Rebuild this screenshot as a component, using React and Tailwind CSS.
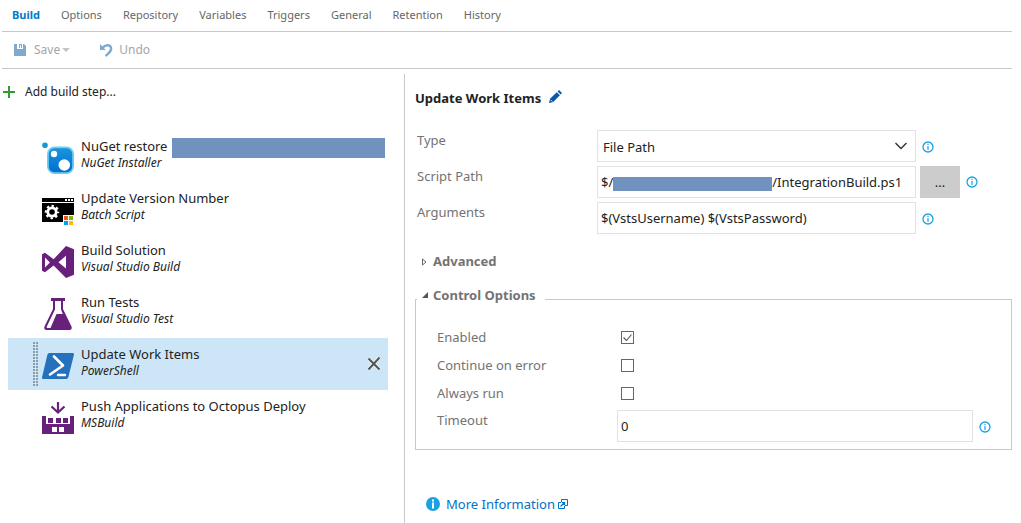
import { useState } from "react";

const tabs = ["Build", "Options", "Repository", "Variables", "Triggers", "General", "Retention", "History"];

function NuGetIcon() {
  return (
    <svg width="32" height="32" viewBox="0 0 32 32" aria-hidden="true">
      <defs>
        <linearGradient id="nuget" x1="0" y1="0" x2="0" y2="1">
          <stop offset="0" stopColor="#1a94dc" />
          <stop offset="1" stopColor="#0070d2" />
        </linearGradient>
      </defs>
      <circle cx="3" cy="3.2" r="2.8" fill="#159ad0" />
      <rect x="5" y="4.500" width="27" height="27.500" rx="7.500" fill="#6fcdf2" />
      <rect x="6.800" y="6.300" width="23.400" height="23.900" rx="5.500" fill="url(#nuget)" />
      <circle cx="12" cy="12" r="3.200" fill="#fff" />
      <circle cx="22.300" cy="23" r="5.800" fill="#fff" />
    </svg>
  );
}

function BatchIcon() {
  return (
    <svg width="32" height="32" viewBox="0 0 32 32" aria-hidden="true">
      <rect x="0" y="4" width="32" height="4" fill="#000" />
      <path d="M23 5h2v2h-2zM26 5h2v2h-2zM29 5h2v2h-2z" fill="#fff" />
      <rect x="0" y="9" width="32" height="19" fill="#000" />
      <circle cx="10" cy="18" r="4.200" fill="none" stroke="#fff" strokeWidth="2.800" />
      <circle cx="10" cy="18" r="6.100" fill="none" stroke="#fff" strokeWidth="2.200" strokeDasharray="2.395 2.395" strokeDashoffset="1.198" />
      <rect x="21" y="21" width="11" height="11" fill="#fff" />
      <rect x="22" y="22" width="4" height="4" fill="#f65314" />
      <rect x="27" y="22" width="4" height="4" fill="#7cbb00" />
      <rect x="22" y="27" width="4" height="4" fill="#00a1f1" />
      <rect x="27" y="27" width="4" height="4" fill="#ffbb00" />
    </svg>
  );
}

function VisualStudioIcon() {
  return (
    <svg width="32" height="32" viewBox="0 0 32 32" aria-hidden="true">
      <path fill="#68217a" fillRule="evenodd" d="M24 0l8 3.200v25.600L24 32 11.600 19.600 3 26.200 0 24.700V8.200L3 6.700l8.600 6.600zM24 9.800l-7.600 6.500 7.600 6.300zM3 11.600v9.800l4.900-5z" />
    </svg>
  );
}

function FlaskIcon() {
  return (
    <svg width="32" height="32" viewBox="0 0 32 32" aria-hidden="true">
      <path fill="#68217a" fillRule="evenodd" d="M9 0h14v3h-2v8l8.500 17.500c.8 2-.2 3.500-2 3.500h-23c-1.800 0-2.800-1.500-2-3.500L11 11V3H9zM13 3v8.500L4.800 28.400c-.4 1 .1 1.600 1 1.600H8.500L14.500 16h6.300L19 11.500V3z" />
    </svg>
  );
}

function PowerShellIcon() {
  return (
    <svg width="32" height="32" viewBox="0 0 32 32" aria-hidden="true">
      <path fill="#2671be" d="M7.500 3H30.500c1.200 0 1.700.8 1.400 2l-5.500 22c-.3 1.200-1.200 2-2.400 2H1.400C.3 29-.2 28.200.1 27L5.300 5c.3-1.200 1.100-2 2.200-2z" />
      <path d="M12 6.500l9 9L8 24.500" fill="none" stroke="#fff" strokeWidth="2.600" strokeLinecap="round" strokeLinejoin="round" />
      <path d="M16 25h7" stroke="#fff" strokeWidth="2.400" strokeLinecap="round" />
    </svg>
  );
}

function MSBuildIcon() {
  return (
    <svg width="32" height="32" viewBox="0 0 32 32" aria-hidden="true">
      <path d="M16 0v10M9.500 4.500l6.500 6 6.500-6" fill="none" stroke="#68217a" strokeWidth="2.200" />
      <path fill="#68217a" fillRule="evenodd" d="M0 14h4v8h24v-8h4v18H0zM10 25v5h5v-5zM17 25v5h5v-5z" />
      <path fill="#68217a" d="M6 16h5v5H6zM14 16h5v5h-5zM21 16h5v5h-5z" />
    </svg>
  );
}

const steps = [
  { name: "NuGet restore", task: "NuGet Installer", Icon: NuGetIcon, masked: true },
  { name: "Update Version Number", task: "Batch Script", Icon: BatchIcon },
  { name: "Build Solution", task: "Visual Studio Build", Icon: VisualStudioIcon },
  { name: "Run Tests", task: "Visual Studio Test", Icon: FlaskIcon },
  { name: "Update Work Items", task: "PowerShell", Icon: PowerShellIcon },
  { name: "Push Applications to Octopus Deploy", task: "MSBuild", Icon: MSBuildIcon },
];

function InfoButton({ label }) {
  return (
    <button type="button" aria-label={label} className="shrink-0">
      <svg width="12" height="12" viewBox="0 0 12 12" className="block" aria-hidden="true">
        <circle cx="6" cy="6" r="5" fill="none" stroke="#1ba1e2" strokeWidth="1.300" />
        <path d="M5.400 2.800h1.200v1.200H5.400zM5.400 5h1.200v4H5.400z" fill="#1ba1e2" />
      </svg>
    </button>
  );
}

function Step({ step, selected, onSelect }) {
  const { name, task, Icon, masked } = step;
  return (
    <li className={selected ? "flex h-[52px] items-center bg-[#cde6f7]" : "flex h-[52px] items-center"}>
      <div className="flex w-[34px] shrink-0 justify-end pr-1">
        {selected && (
          <svg width="5" height="44" aria-hidden="true">
            <defs>
              <pattern id="grip" width="3" height="3" patternUnits="userSpaceOnUse">
                <rect width="2" height="2" fill="#8a9baa" />
              </pattern>
            </defs>
            <rect width="5" height="44" fill="url(#grip)" />
          </svg>
        )}
      </div>
      <button type="button" onClick={onSelect} className="flex h-full min-w-0 flex-1 text-left">
        <span className="shrink-0 pt-3"><Icon /></span>
        <span className="flex min-w-0 flex-1 flex-col pt-[7px] pl-[7px]">
          <span className="flex h-[18px] items-center gap-[5px] text-[13px] leading-[18px] whitespace-nowrap">
            {name}
            {masked && <span className="mt-1 mr-[3px] h-5 flex-1 bg-[#7092be]" />}
          </span>
          <span className="text-[12px] leading-4 italic">{task}</span>
        </span>
      </button>
      {selected && (
        <button type="button" aria-label={"Remove " + name} className="mr-[7px] shrink-0">
          <svg width="14" height="14" viewBox="0 0 14 14" className="block" aria-hidden="true">
            <path d="M1.500 1.500l11 11M12.500 .5L1.500 12.500" fill="none" stroke="#fff" strokeWidth="3.600" opacity=".6" />
            <path d="M1.500 1.500l11 11M12.500 .5L1.500 12.500" fill="none" stroke="#555" strokeWidth="2" />
          </svg>
        </button>
      )}
    </li>
  );
}

function CheckRow({ id, label, defaultChecked }) {
  return (
    <div className="grid h-7 grid-cols-[184px_1fr] items-center">
      <label htmlFor={id}>{label}</label>
      <span className="relative flex size-[13px]">
        <input id={id} type="checkbox" defaultChecked={defaultChecked} className="peer size-[13px] appearance-none border border-[#666] bg-white" />
        <svg viewBox="0 0 13 13" className="pointer-events-none absolute inset-0 hidden peer-checked:block" aria-hidden="true">
          <path d="M2.500 6.500l3 3 5-6" fill="none" stroke="#555" strokeWidth="1.100" />
        </svg>
      </span>
    </div>
  );
}

const fieldRow = "grid grid-cols-[180px_1fr_96px]";
const fieldBox = "h-8 w-full min-w-0 border border-[#e2e2e2] bg-white text-[13px] text-[#222]";

export default function App() {
  const [selected, setSelected] = useState(4);
  const [advanced, setAdvanced] = useState(false);
  return (
    <div className="flex min-h-screen flex-col bg-white pr-[9px] pl-[2px] font-['Noto_Sans','Open_Sans',sans-serif] text-[13px] leading-5 text-[#222]">
      <nav className="flex h-8 items-center gap-[21px] border-b border-[#c8c8c8] pb-[2px] pl-[10px] text-[11px] leading-4 text-[#666]">
        {tabs.map((tab, i) => (
          <a key={tab} href={"#" + tab.toLowerCase()} className={i === 0 ? "font-bold text-[#007acc]" : ""}>{tab}</a>
        ))}
      </nav>
      <div className="flex h-[37px] items-center gap-[30px] border-b border-[#c8c8c8] pl-3 text-[12px] leading-4 text-[#a5a5a5]">
        <button type="button" className="flex items-center gap-2">
          <svg width="12" height="12" viewBox="0 0 12 12" aria-hidden="true">
            <path fill="#7fa9cf" fillRule="evenodd" d="M0 0h3v5h6V0h1l2 2v10H0zM5 0h3v4H7V1H6v3H5z" />
          </svg>
          <span className="flex items-center gap-[2px]">
            Save
            <svg width="8" height="4" viewBox="0 0 8 4" aria-hidden="true"><path d="M0 0h8L4 4z" fill="#c4c4c4" /></svg>
          </span>
        </button>
        <button type="button" className="flex items-center gap-[6px]">
          <svg width="13" height="14" viewBox="0 0 13 14" aria-hidden="true">
            <path d="M0 1v6h6L4 5.200" fill="#7fa9cf" />
            <path d="M2.500 5.500C4 2 9.500 1 11 4.500c1 3-2 5.500-5.500 8.500" fill="none" stroke="#7fa9cf" strokeWidth="2.400" />
          </svg>
          Undo
        </button>
      </div>

      <div className="flex flex-1 pt-[5px]">
        <aside className="w-[402px] shrink-0 pt-2">
          <button type="button" className="flex items-center gap-[10px] pl-px text-[12px] leading-5">
            <svg width="12" height="12" viewBox="0 0 12 12" aria-hidden="true"><path d="M5 0h2v5h5v2H7v5H5V7H0V5h5z" fill="#339933" /></svg>
            Add build step...
          </button>
          <ul className="mt-7 mr-4 ml-[6px]">
            {steps.map((step, i) => (
              <Step key={step.name} step={step} selected={i === selected} onSelect={() => setSelected(i)} />
            ))}
          </ul>
        </aside>

        <main className="min-w-0 flex-1 border-l border-[#c8c8c8] pt-[14px] pl-[10px] text-[#737373]">
          <h1 className="flex items-center gap-2 font-bold text-[#222]">
            Update Work Items
            <button type="button" aria-label="Rename step" className="pb-1">
              <svg width="13" height="13" viewBox="0 0 13 13" className="block" aria-hidden="true">
                <path d="M0 13l1-4.200 6.800-6.600 3.100 3.100L4.200 12zM8.600 1.400L10 0l3 3-1.400 1.500z" fill="#0a59a8" />
                <path d="M1.600 9.800l1.700 1.700" stroke="#fff" strokeWidth=".8" />
              </svg>
            </button>
          </h1>

          <form className="pt-[22px]">
            <div className="flex flex-col gap-1">
              <div className={fieldRow}>
                <label htmlFor="type" className="pl-[2px]">Type</label>
                <span className="relative ml-[2px]">
                  <select id="type" className={fieldBox + " appearance-none pt-[2px] pl-[5px]"}>
                    <option>File Path</option>
                    <option>Inline Script</option>
                  </select>
                  <svg width="12" height="8" viewBox="0 0 12 8" className="pointer-events-none absolute top-3 right-[9px]" aria-hidden="true">
                    <path d="M.5 1L6 6.500 11.500 1" fill="none" stroke="#333" strokeWidth="1.400" />
                  </svg>
                </span>
                <span className="flex items-center pt-[2px] pl-[6px]"><InfoButton label="About type" /></span>
              </div>
              <div className={fieldRow}>
                <label htmlFor="path" className="pl-[2px]">Script Path</label>
                <span className="ml-[2px] flex h-8 min-w-0 items-center border border-[#e2e2e2] pl-[3px] text-[#222]">
                  $/
                  <span className="mt-1 h-[14px] w-[159px] shrink-0 bg-[#7092be]" />
                  <input id="path" defaultValue="/IntegrationBuild.ps1" className="h-full min-w-0 flex-1 outline-none" />
                </span>
                <span className="flex items-center gap-[6px] pl-1">
                  <button type="button" aria-label="Browse" className="h-8 w-10 bg-[#cccccc] text-[#222]">...</button>
                  <span className="pt-[2px]"><InfoButton label="About script path" /></span>
                </span>
              </div>
              <div className={fieldRow}>
                <label htmlFor="arguments" className="pl-[2px]">Arguments</label>
                <span className="ml-[2px]">
                  <input id="arguments" defaultValue="$(VstsUsername) $(VstsPassword)" className={fieldBox + " block pl-[3px]"} />
                </span>
                <span className="flex items-center pt-[2px] pl-[6px]"><InfoButton label="About arguments" /></span>
              </div>
            </div>

            <button type="button" aria-expanded={advanced} onClick={() => setAdvanced(!advanced)} className="mt-[17px] flex items-center gap-[6px] pl-[7px] font-bold">
              <span className="pt-[2px]">
                <svg width="5" height="8" viewBox="0 0 5 8" className="block" aria-hidden="true"><path d="M.5 1v6L4 4z" fill="none" stroke="#666" /></svg>
              </span>
              Advanced
            </button>

            <fieldset className="mt-[17px] border border-[#c8c8c8] pb-[7px]">
              <legend className="ml-px pr-[9px] pb-2 pl-[5px] font-bold">
                <button type="button" aria-expanded="true" className="flex items-center gap-[5px] leading-[14px]">
                  <svg width="6" height="6" viewBox="0 0 6 6" aria-hidden="true"><path d="M6 0v6H0z" fill="#555" /></svg>
                  Control Options
                </button>
              </legend>
              <div className="pt-[13px] pl-[21px]">
                <CheckRow id="enabled" label="Enabled" defaultChecked />
                <CheckRow id="continue" label="Continue on error" />
                <CheckRow id="always" label="Always run" />
                <div className="grid grid-cols-[180px_1fr_38px] pt-[3px]">
                  <label htmlFor="timeout">Timeout</label>
                  <input id="timeout" defaultValue="0" className={fieldBox + " pl-[3px]"} />
                  <span className="flex items-center pt-[2px] pl-[6px]"><InfoButton label="About timeout" /></span>
                </div>
              </div>
            </fieldset>
          </form>

          <p className="flex items-center gap-[6px] pt-11 pl-[11px]">
            <svg width="14" height="14" viewBox="0 0 14 14" aria-hidden="true">
              <circle cx="7" cy="7" r="7" fill="#1ba1e2" />
              <path d="M6 2.500h2v2H6zM6 5.500h2v6H6z" fill="#fff" />
            </svg>
            <a href="#more-information" className="flex items-center gap-[3px] text-[#0072c6]">
              More Information
              <svg width="10" height="10" viewBox="0 0 10 10" aria-hidden="true">
                <path d="M3.500 3V.5h6v6H7M3 3.500H.5v6h6V7" fill="none" stroke="#0072c6" />
                <path d="M2.500 7.500L6.500 3.500M3.800 3.500h2.700v2.700" fill="none" stroke="#0072c6" strokeWidth="1.200" />
              </svg>
            </a>
          </p>
        </main>
      </div>
    </div>
  );
}
